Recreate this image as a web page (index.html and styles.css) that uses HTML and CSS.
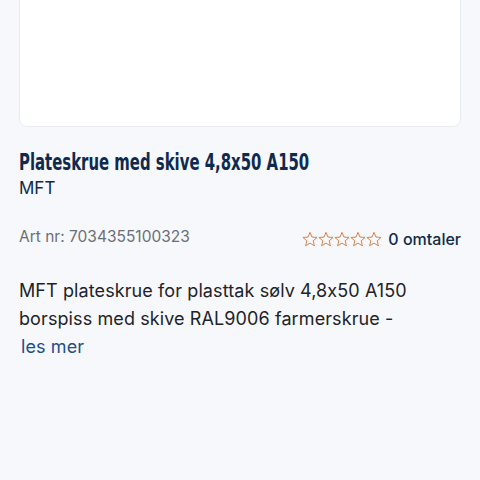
FILE: index.html
```html
<!DOCTYPE html>
<html lang="no">
<head>
  <meta charset="UTF-8">
  <title>Plateskrue med skive 4,8x50 A150</title>
  <meta name="viewport" content="width=device-width, initial-scale=1.0">
  <link rel="stylesheet" href="styles.css">
</head>
<body>

<div class="image-box"></div>

<h1 class="title"><span>Plateskrue med skive 4,8x50 A150</span></h1>
<div class="brand">MFT</div>

<div class="meta">
  <span class="art-nr">Art nr: 7034355100323</span>
  <a class="reviews" href="#">
    <span class="stars">
      <svg viewBox="0 0 24 24"><path d="M12 2l3 7.1 7.6.6-5.8 5 1.8 7.5L12 18.2l-6.6 4 1.8-7.5-5.8-5 7.6-.6z"/></svg>
      <svg viewBox="0 0 24 24"><path d="M12 2l3 7.1 7.6.6-5.8 5 1.8 7.5L12 18.2l-6.6 4 1.8-7.5-5.8-5 7.6-.6z"/></svg>
      <svg viewBox="0 0 24 24"><path d="M12 2l3 7.1 7.6.6-5.8 5 1.8 7.5L12 18.2l-6.6 4 1.8-7.5-5.8-5 7.6-.6z"/></svg>
      <svg viewBox="0 0 24 24"><path d="M12 2l3 7.1 7.6.6-5.8 5 1.8 7.5L12 18.2l-6.6 4 1.8-7.5-5.8-5 7.6-.6z"/></svg>
      <svg viewBox="0 0 24 24"><path d="M12 2l3 7.1 7.6.6-5.8 5 1.8 7.5L12 18.2l-6.6 4 1.8-7.5-5.8-5 7.6-.6z"/></svg>
    </span>
    0 omtaler
  </a>
</div>

<p class="description">
  MFT plateskrue for plasttak sølv 4,8x50 A150<br>
  borspiss med skive RAL9006 farmerskrue -<br>
  <a class="read-more" href="#">les mer</a>
</p>

</body>
</html>
```

FILE: styles.css
```css
body {
  margin: 0;
  padding: 0 19px;
  background: #f6f8fb;
  font-family: "Inter", "Liberation Sans", sans-serif;
  font-feature-settings: "calt" 0;
  color: #1e2329;
}
a {
  text-decoration: none;
}
.image-box {
  height: 127px;
  background: #fff;
  border: 1px solid #e9edf2;
  border-top: none;
  border-radius: 0 0 8px 8px;
  box-sizing: border-box;
}
.title {
  margin: 21px 0 0;
  font-family: "DejaVu Sans", sans-serif;
  font-stretch: condensed;
  font-size: 23px;
  font-weight: bold;
  line-height: 28px;
  color: #0f2a4d;
  white-space: nowrap;
}
.title span {
  display: inline-block;
  transform: scaleX(0.72);
  transform-origin: left center;
}
.brand {
  font-size: 17px;
  line-height: 24px;
  color: #0f2a4d;
}
.meta {
  display: flex;
  justify-content: space-between;
  align-items: center;
  margin-top: 24px;
}
.art-nr {
  font-size: 15.5px;
  color: #6b6f75;
}
.reviews {
  display: flex;
  align-items: center;
  gap: 6px;
  font-size: 16px;
  font-weight: 500;
  color: #0f2a4d;
  margin-top: 5px;
}
.stars {
  display: flex;
}
.stars svg {
  width: 16px;
  height: 16px;
  fill: none;
  stroke: #d9844f;
  stroke-width: 1.5;
}
.description {
  margin: 28px 0 0;
  font-size: 18px;
  letter-spacing: 0.1px;
  line-height: 28px;
}
.read-more {
  display: inline-block;
  margin-left: 2px;
  color: #1d4f8c;
}
```
